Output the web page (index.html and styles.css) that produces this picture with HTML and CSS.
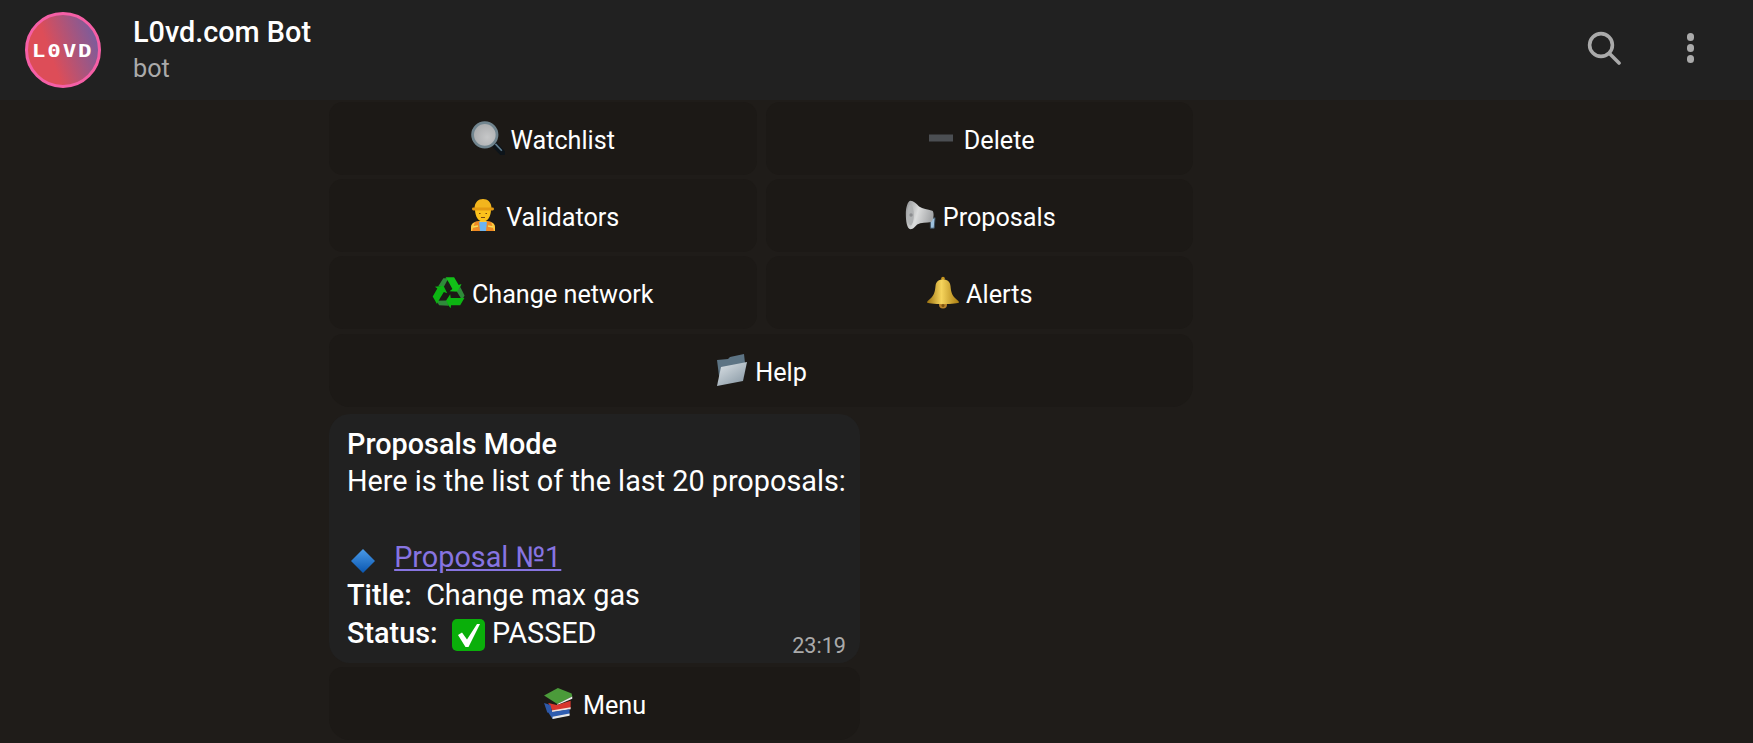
FILE: index.html
```html
<!DOCTYPE html>
<html lang="en">
<head>
  <meta charset="UTF-8" />
  <meta name="viewport" content="width=device-width, initial-scale=1.0" />
  <title>L0vd.com Bot</title>
  <link rel="stylesheet" href="styles.css">
</head>
<body>
  <header class="topbar">
    <div class="avatar"><span>L0VD</span></div>
    <div class="peer">
      <div class="peer-name">L0vd.com Bot</div>
      <div class="peer-status">bot</div>
    </div>
    <div class="topbar-tools">
      <svg class="tool-search" viewBox="0 0 34 34" width="34" height="34">
        <circle cx="14" cy="14" r="11.4" fill="none" stroke="#aaa" stroke-width="3.6"/>
        <path d="M22.5 22.5L32 32" fill="none" stroke="#aaa" stroke-width="3.6" stroke-linecap="round"/>
      </svg>
      <div class="tool-more"><i></i><i></i><i></i></div>
    </div>
  </header>

  <main class="chat">
    <div class="keyboard">
      <button class="key">
        <svg class="emoji" viewBox="0 0 32 32">
          <defs><radialGradient id="lens" cx="0.6" cy="0.6" r="0.7"><stop offset="0" stop-color="#c6c7c8"/><stop offset="1" stop-color="#a5a7a9"/></radialGradient></defs>
          <path d="M21 21L29.5 30" stroke="#0d141a" stroke-width="5.5" stroke-linecap="round"/>
          <path d="M23 21.5L29 28" stroke="#5f7c8f" stroke-width="1.5"/>
          <circle cx="13" cy="13" r="11.5" fill="url(#lens)" stroke="#71858f" stroke-width="2.6"/>
        </svg>
        Watchlist
      </button>
      <button class="key">
        <svg class="emoji" viewBox="0 0 34 34"><rect x="5" y="13.5" width="24" height="7" fill="#4b4e52"/></svg>
        Delete
      </button>
      <button class="key">
        <svg class="emoji" viewBox="0 0 34 34">
          <path d="M5 33v-4c0-4 4-6 12-6s12 2 12 6v4z" fill="#ffc83d"/>
          <path d="M11 33v-9h12v9z" fill="#6cb4f0"/>
          <path d="M6 33l3-9 4-1 1 10zM28 33l-3-9-4-1-1 10z" fill="#f08a24"/>
          <path d="M7 29l5-1M27 29l-5-1" stroke="#f3e05a" stroke-width="1.6"/>
          <path d="M9 11h16c0 8-3.500 12.500-8 12.500S9 19 9 11z" fill="#fcc21b"/>
          <path d="M13 15.500h1.500M19.500 15.500h1.500M15 19.500h4" stroke="#7a4a12" stroke-width="1.2"/>
          <path d="M8.500 10.500C8.500 4 12.500 1 17 1s8.500 3 8.500 9.500z" fill="#f2b51d"/>
          <rect x="6" y="9.500" width="22" height="3" rx="1.4" fill="#e39a12"/>
        </svg>
        Validators
      </button>
      <button class="key">
        <svg class="emoji" viewBox="-3 -1 36 34">
          <defs><linearGradient id="horn" x1="0" y1="0" x2="1" y2="0.3"><stop offset="0" stop-color="#8d8f91"/><stop offset="0.5" stop-color="#dcdddd"/><stop offset="1" stop-color="#a5a7a9"/></linearGradient></defs>
          <path d="M26 20v10h4l1-11z" fill="#9dc0dc" stroke="#3d5060"/>
          <path d="M5 1c3 0 6 3 9 6 4 2.500 9 3 14 4.500 2 .7 2 9-1 12-5 1-11 .5-15 2.500-2 2-4 5-7 5C1 31 0 22 0 15 0 8 2 1 5 1z" fill="url(#horn)"/>
          <ellipse cx="5" cy="16" rx="3.5" ry="11" fill="#b0b2b3"/>
          <circle cx="5.5" cy="16" r="1.8" fill="#8b8d8f"/>
        </svg>
        Proposals
      </button>
      <button class="key">
        <svg class="emoji" viewBox="2 2 30 30">
          <g>
            <path d="M7.500 11L12 4h4.500l-4 7.500z" fill="#2f8a3a"/>
            <path d="M14 3h7.500l4 7 2.500-1-3 7-7.500-.5 2.500-2L17 8z" fill="#12bf18"/>
          </g>
          <g transform="rotate(120 17 17)">
            <path d="M7.500 11L12 4h4.500l-4 7.500z" fill="#2f8a3a"/>
            <path d="M14 3h7.500l4 7 2.500-1-3 7-7.500-.5 2.500-2L17 8z" fill="#0cb512"/>
          </g>
          <g transform="rotate(240 17 17)">
            <path d="M7.500 11L12 4h4.500l-4 7.500z" fill="#2f8a3a"/>
            <path d="M14 3h7.500l4 7 2.500-1-3 7-7.500-.5 2.500-2L17 8z" fill="#0cb512"/>
          </g>
        </svg>
        Change network
      </button>
      <button class="key">
        <svg class="emoji" viewBox="0 0 34 34">
          <defs><linearGradient id="bell" x1="0" y1="0" x2="1" y2="0"><stop offset="0" stop-color="#9c7210"/><stop offset="0.45" stop-color="#f6d45c"/><stop offset="1" stop-color="#a97c10"/></linearGradient></defs>
          <circle cx="17" cy="2.500" r="1.8" fill="#c6951f"/>
          <circle cx="17" cy="28.500" r="4" fill="#b9822a"/>
          <path d="M17 3.500c5 0 7 2.500 7.500 6.500.5 5 1 8 4 11.500 2 2 4.500 3.500 4.500 5 0 .8-7 1.500-16 1.500S1 27.300 1 26.500c0-1.500 2.500-3 4.500-5 3-3.500 3.500-6.500 4-11.500.5-4 2.500-6.500 7.500-6.500z" fill="url(#bell)"/>
          <circle cx="17" cy="29.500" r="1.500" fill="#7a5210"/>
        </svg>
        Alerts
      </button>
      <button class="key key-wide">
        <svg class="emoji" viewBox="0 0 34 34">
          <defs><linearGradient id="folder" x1="0" y1="0" x2="0.8" y2="1"><stop offset="0" stop-color="#dfe5e9"/><stop offset="1" stop-color="#8a9aa6"/></linearGradient></defs>
          <path d="M2 7l11-1 2-2 14-3 1 9L5 31z" fill="#5d7484"/>
          <path d="M6 14l26-5-4 19-26 5z" fill="url(#folder)"/>
        </svg>
        Help
      </button>
    </div>

    <article class="bubble">
      <div class="bubble-text">
        <div><b>Proposals Mode</b></div>
        <div>Here is the list of the last 20 proposals:</div>
        <div class="blank">&nbsp;</div>
        <div>
          <svg class="emoji-inline emoji-gem" viewBox="0 0 32 32">
            <defs><linearGradient id="gem" x1="0" y1="0" x2="0" y2="1"><stop offset="0" stop-color="#4a9be8"/><stop offset="1" stop-color="#0a56b0"/></linearGradient></defs>
            <path d="M16 4L28 16 16 28 4 16z" fill="url(#gem)"/>
          </svg>
          <a class="link" href="#">Proposal №1</a>
        </div>
        <div><b>Title:</b>&nbsp; Change max gas</div>
        <div><b>Status:</b>&nbsp;
          <svg class="emoji-inline emoji-check" viewBox="0 0 33 32">
            <rect width="33" height="32" rx="5" fill="#0aaf0a"/>
            <path d="M6 16l4-2.500 5 7L25 5h3L16.500 28h-3z" fill="#fff"/>
          </svg>
          PASSED
        </div>
      </div>
      <span class="time">23:19</span>
    </article>

    <button class="key key-menu">
      <svg class="emoji" viewBox="0 0 32 32">
        <path d="M1 8l13-7 13 5 .5 3-14 7z" fill="#4b9b3a"/>
        <path d="M13.500 16l14-7v2l-14 6z" fill="#eee"/>
        <path d="M5 15l8 2 13-4v7l-17 3z" fill="#d8372e"/>
        <path d="M8 22l18-3v2l-18 3z" fill="#f0e5e0"/>
        <path d="M1 15l6 2 2 8-5-1z" fill="#2d58a8"/>
        <path d="M5 24l20-3v5L9 30z" fill="#2f5db0"/>
        <path d="M9 28l16-3v2l-16 3z" fill="#e8e8e8"/>
      </svg>
      Menu
    </button>
  </main>
</body>
</html>
```

FILE: styles.css
```css
html, body {
  height: 100%;
}
body {
  margin: 0;
  background: #1f1c19;
  color: #fff;
  font-family: Roboto, 'Noto Sans', sans-serif;
  overflow: hidden;
}
.topbar {
  display: flex;
  align-items: center;
  height: 100px;
  padding: 0 59px 0 25px;
  box-sizing: border-box;
  background: #212121;
}
.avatar {
  display: flex;
  align-items: center;
  justify-content: center;
  width: 76px;
  height: 76px;
  box-sizing: border-box;
  border: 3px solid #f55fa6;
  border-radius: 50%;
  background: linear-gradient(70deg, #dd4d58 35%, #7b5c9c 90%);
}
.avatar span {
  font-family: 'DejaVu Sans Mono', monospace;
  font-weight: bold;
  font-size: 18px;
  letter-spacing: 1.5px;
  transform: scaleX(1.25);
}
.peer {
  margin-left: 32px;
  margin-top: 2px;
}
.peer-name {
  font-size: 28.8px;
  font-weight: 500;
  line-height: 36px;
}
.peer-status {
  font-size: 25.2px;
  line-height: 38px;
  color: #aaa;
}
.topbar-tools {
  display: flex;
  align-items: center;
  gap: 66px;
  margin-left: auto;
  margin-top: -4px;
}
.tool-more {
  display: flex;
  flex-direction: column;
  gap: 3.3px;
}
.tool-more i {
  display: block;
  width: 7.5px;
  height: 7.5px;
  border-radius: 50%;
  background: #aaa;
}
.chat {
  display: flex;
  flex-direction: column;
  width: 864px;
  margin-left: 329px;
  padding-top: 1.5px;
}
.keyboard {
  display: grid;
  grid-template-columns: 1fr 1fr;
  gap: 4.4px 9px;
}
.key {
  display: flex;
  align-items: center;
  justify-content: center;
  gap: 6px;
  height: 73px;
  padding: 4px 0 0;
  border: none;
  border-radius: 14px;
  background: #1c1916;
  color: #fff;
  font-family: inherit;
  font-size: 25.2px;
}
.key-wide {
  grid-column: 1 / 3;
  border-radius: 14px 14px 21px 21px;
}
.key-menu {
  width: 531px;
  margin-top: 4.4px;
  border-radius: 14px 14px 21px 21px;
}
.emoji {
  flex: none;
  width: 34px;
  height: 34px;
  margin-top: -4px;
}
.bubble {
  position: relative;
  width: 531px;
  margin-top: 7px;
  padding: 12px 14px 10px 18px;
  box-sizing: border-box;
  border-radius: 21px;
  background: #212121;
  font-size: 28.8px;
  line-height: 37.8px;
}
.bubble b {
  font-weight: 500;
}
.bubble-text > div {
  white-space: nowrap;
}
.emoji-inline {
  width: 32px;
  height: 32px;
  vertical-align: -8px;
}
.emoji-gem {
  vertical-align: -10px;
}
.emoji-check {
  width: 33px;
}
.link {
  margin-left: 8px;
  color: #8774e1;
}
.time {
  position: absolute;
  right: 14px;
  bottom: 3px;
  font-size: 21.6px;
  line-height: 28px;
  color: #aaa;
}
```
